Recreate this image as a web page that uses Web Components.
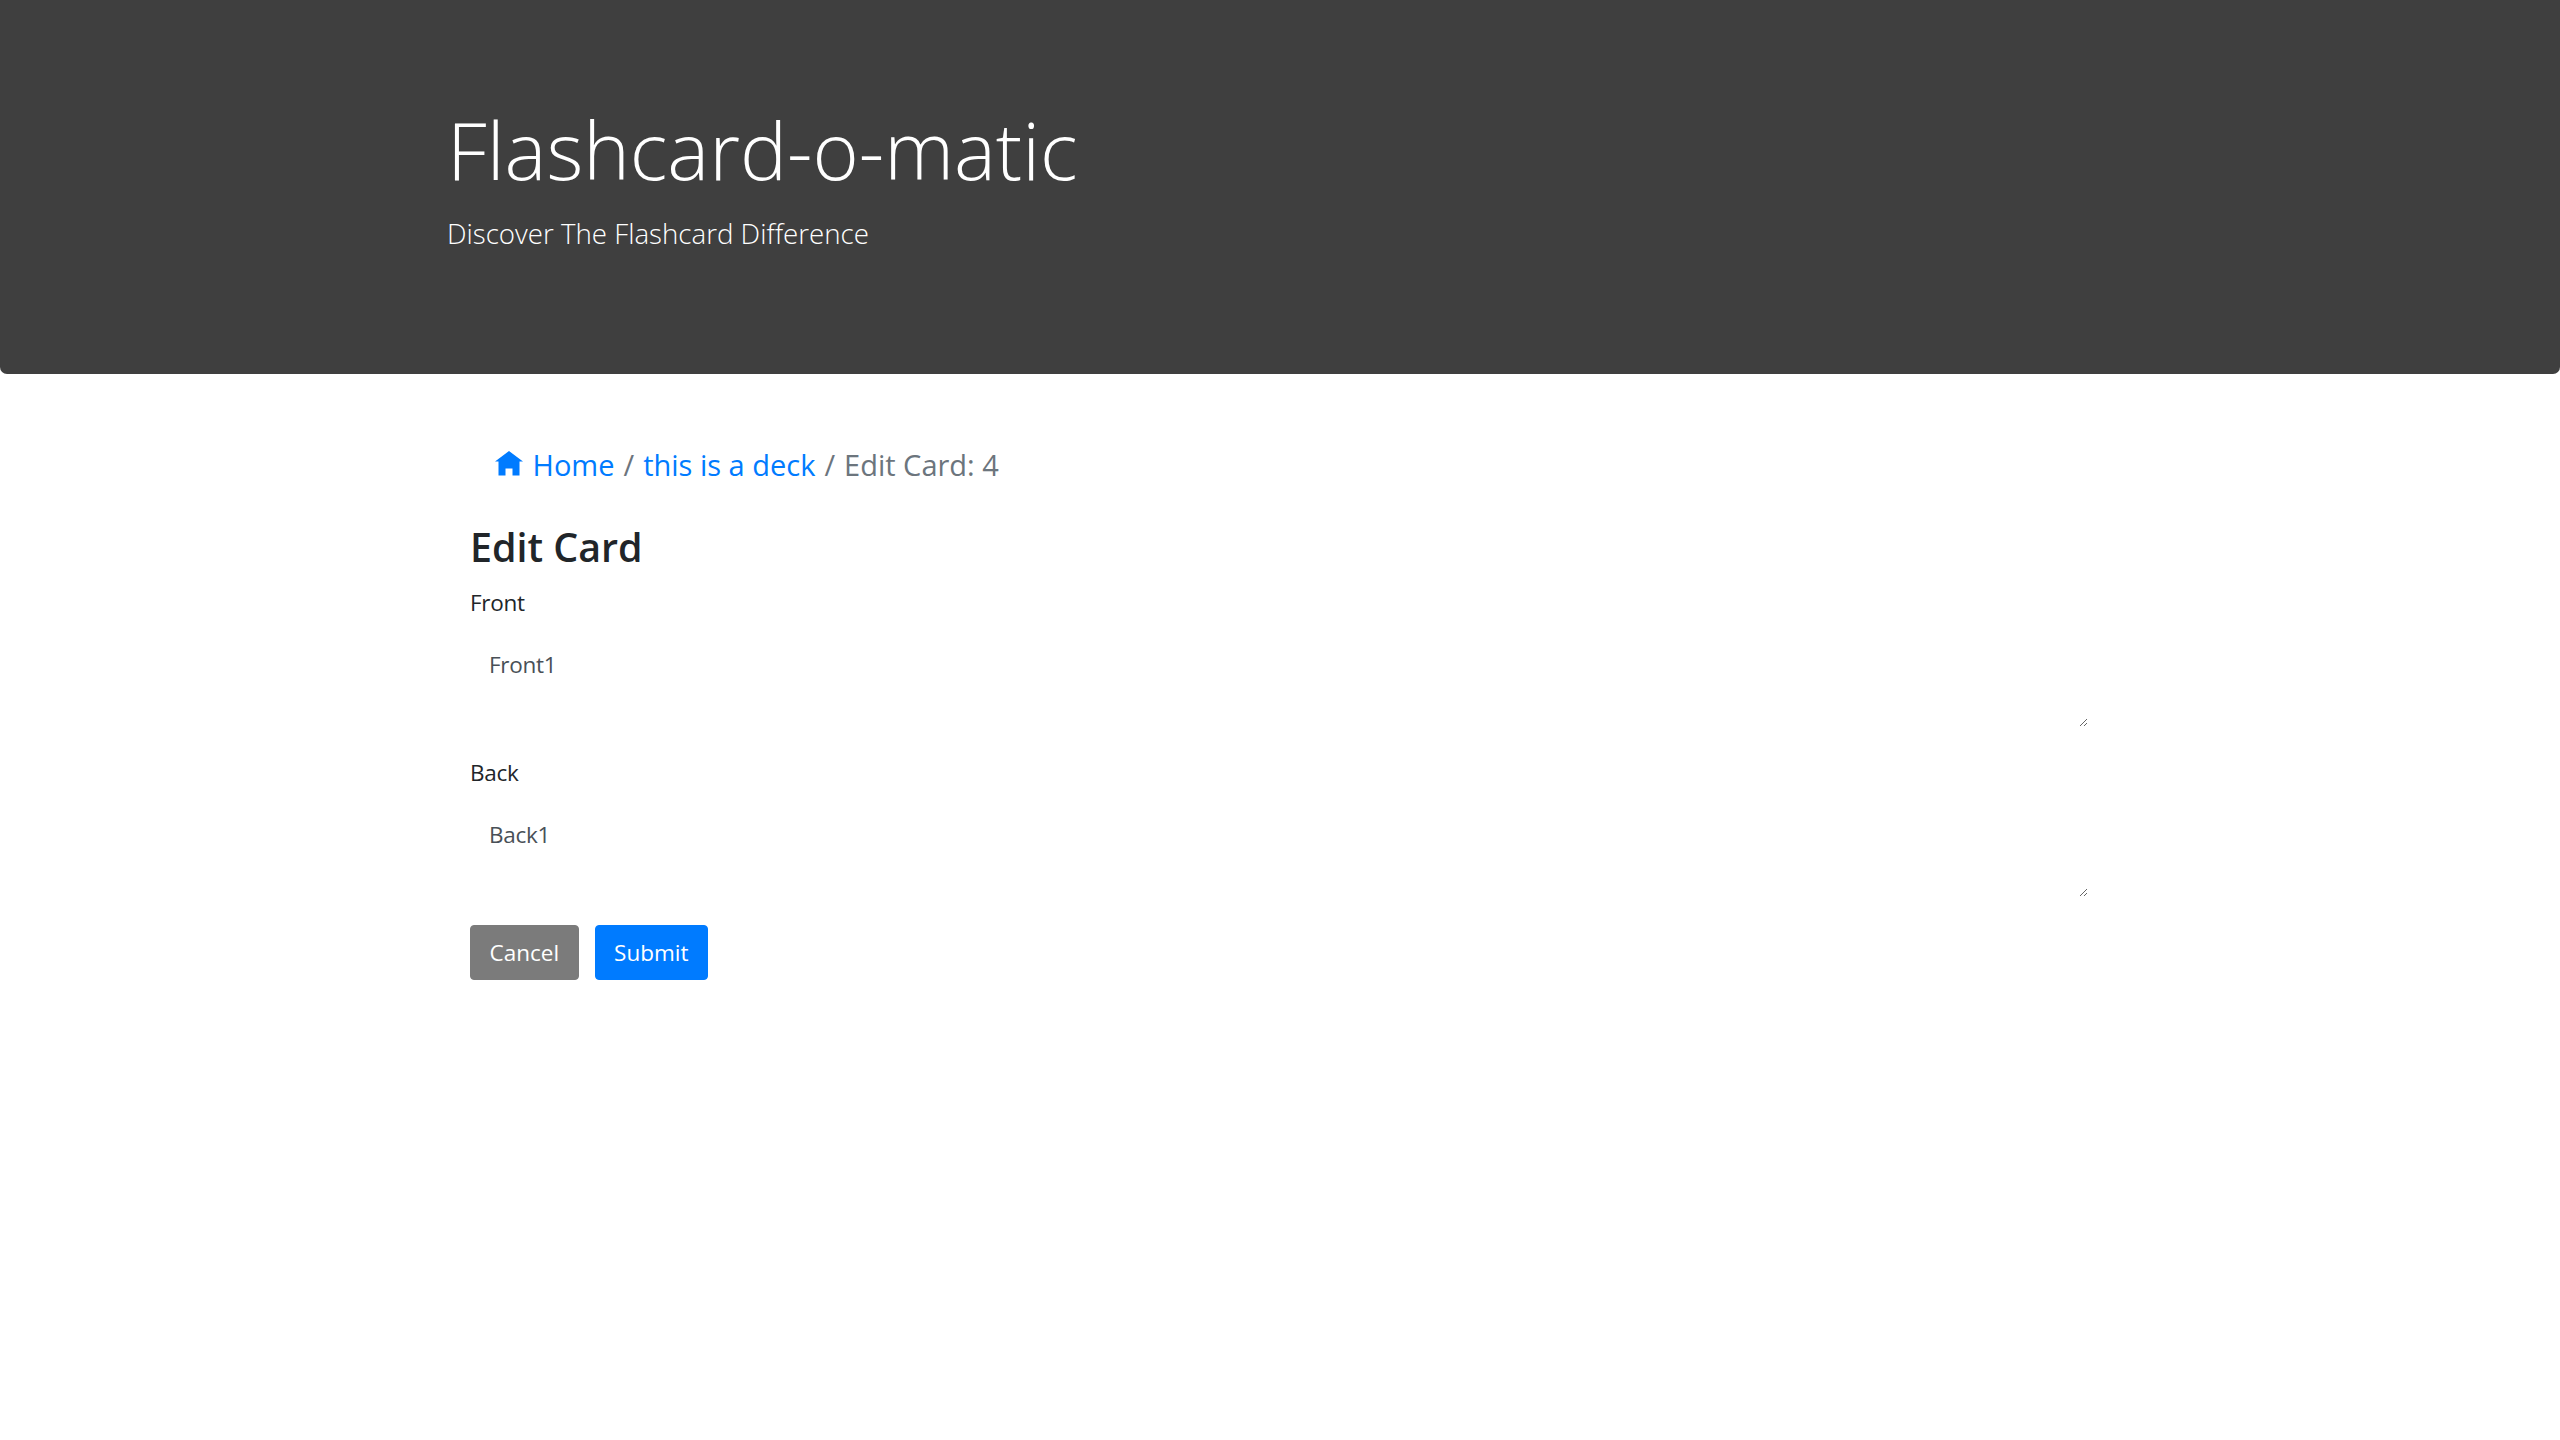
<!DOCTYPE html>
<html>
<head>
<meta charset="utf-8">
<title>Flashcard-o-matic</title>
<style>
  body { margin: 0; background: #fff; font-family: "Open Sans", "Liberation Sans", sans-serif; font-size: 23.4px; color: #212529; }
</style>
</head>
<body>
<flash-header heading="Flashcard-o-matic" tagline="Discover The Flashcard Difference"></flash-header>
<page-container>
  <crumb-nav>
    <a href="#"><home-icon></home-icon> Home</a>
    <a href="#">this is a deck</a>
    <span>Edit Card: 4</span>
  </crumb-nav>
  <card-form heading="Edit Card">
    <form-field label="Front" value="Front1"></form-field>
    <form-field label="Back" value="Back1"></form-field>
    <flash-button slot="actions" kind="secondary">Cancel</flash-button>
    <flash-button slot="actions" kind="primary">Submit</flash-button>
  </card-form>
</page-container>
<script>
class FlashHeader extends HTMLElement{
    constructor(){
        super();
        this.shadowDOM = this.attachShadow({mode: "open"});
    }
    connectedCallback(){
        this.shadowDOM.innerHTML=`
        <style>
            :host{
                display: block;
                height: 374px;
                box-sizing: border-box;
                background: #3f3f3f;
                color: #fff;
                border-radius: 0 0 7px 7px;
                padding: 97px 447px 0;
            }
            h1{
                margin: 0 0 10px;
                font-weight: 300;
                font-size: 79px;
                line-height: 106px;
            }
            p{
                margin: 0;
                font-weight: 300;
                font-size: 27.7px;
                line-height: 40px;
            }
        </style>
        <h1>${this.getAttribute("heading")}</h1>
        <p>${this.getAttribute("tagline")}</p>`;
    }
}

class PageContainer extends HTMLElement{
    constructor(){
        super();
        this.attachShadow({mode: "open"}).innerHTML=`
        <style>
            :host{
                display: block;
                padding: 0 472px 0 470px;
            }
        </style>
        <slot></slot>`;
    }
}

class HomeIcon extends HTMLElement{
    constructor(){
        super();
        this.attachShadow({mode: "open"}).innerHTML=`
        <style>
            :host{
                display: inline-block;
                width: 28px;
                height: 28px;
                margin: 0 2px 0 -1px;
                vertical-align: -3px;
            }
            svg{
                display: block;
                width: 100%;
                height: 100%;
                fill: currentColor;
            }
        </style>
        <svg viewBox="0 0 8 8"><path d="M4 0l-4 3h1v4h2v-2h2v2h2v-4.03l1 .03-4-3z"/></svg>`;
    }
}

class CrumbNav extends HTMLElement{
    constructor(){
        super();
        this.attachShadow({mode: "open"}).innerHTML=`
        <style>
            :host{
                display: flex;
                padding: 73px 0 0 26px;
                height: 148px;
                box-sizing: border-box;
                line-height: 35px;
                font-size: 29px;
                color: #6c757d;
            }
            ::slotted(a){
                color: #007bff;
                text-decoration: none;
            }
            ::slotted(*:not(:first-child))::before{
                content: "/";
                color: #6c757d;
                padding: 0 9px;
            }
        </style>
        <slot></slot>`;
    }
}

class CardForm extends HTMLElement{
    constructor(){
        super();
        this.attachShadow({mode: "open"}).innerHTML=`
        <style>
            :host{
                display: block;
            }
            h3{
                margin: 0 0 13px;
                font-weight: 600;
                font-size: 39.4px;
                line-height: 50px;
                color: #212529;
            }
            .actions{
                display: flex;
                gap: 16px;
                margin-top: 5px;
            }
        </style>
        <h3>${this.getAttribute("heading")}</h3>
        <slot></slot>
        <div class="actions"><slot name="actions"></slot></div>`;
    }
}

class FormField extends HTMLElement{
    constructor(){
        super();
        this.attachShadow({mode: "open"});
    }
    connectedCallback(){
        this.shadowRoot.innerHTML=`
        <style>
            :host{
                display: block;
                margin-bottom: 28px;
            }
            label{
                display: block;
                margin-bottom: 17px;
                line-height: 35px;
                font-size: 22.5px;
                letter-spacing: -.3px;
                color: #212529;
            }
            textarea{
                display: block;
                width: 100%;
                height: 90px;
                box-sizing: border-box;
                padding: 10px 19px;
                border: 0;
                outline: 0;
                margin-bottom: 9px;
                background: #fff;
                font: inherit;
                font-size: 22.5px;
                line-height: 35px;
                letter-spacing: -.3px;
                color: #495057;
            }
        </style>
        <label>${this.getAttribute("label")}</label>
        <textarea>${this.getAttribute("value")}</textarea>`;
    }
}

class FlashButton extends HTMLElement{
    constructor(){
        super();
        this.attachShadow({mode: "open"});
    }
    connectedCallback(){
        const colors = this.getAttribute("kind") == "primary" ? "#007bff" : "#7b7b7b";
        this.shadowRoot.innerHTML=`
        <style>
            :host{
                display: block;
            }
            button{
                display: block;
                height: 55px;
                padding: 0 18.5px;
                border: 1px solid ${colors};
                border-radius: 4px;
                background: ${colors};
                color: #fff;
                font: inherit;
                font-size: 22.5px;
            }
        </style>
        <button><slot></slot></button>`;
    }
}

customElements.define("flash-header", FlashHeader);
customElements.define("page-container", PageContainer);
customElements.define("home-icon", HomeIcon);
customElements.define("crumb-nav", CrumbNav);
customElements.define("card-form", CardForm);
customElements.define("form-field", FormField);
customElements.define("flash-button", FlashButton);
</script>
</body>
</html>
